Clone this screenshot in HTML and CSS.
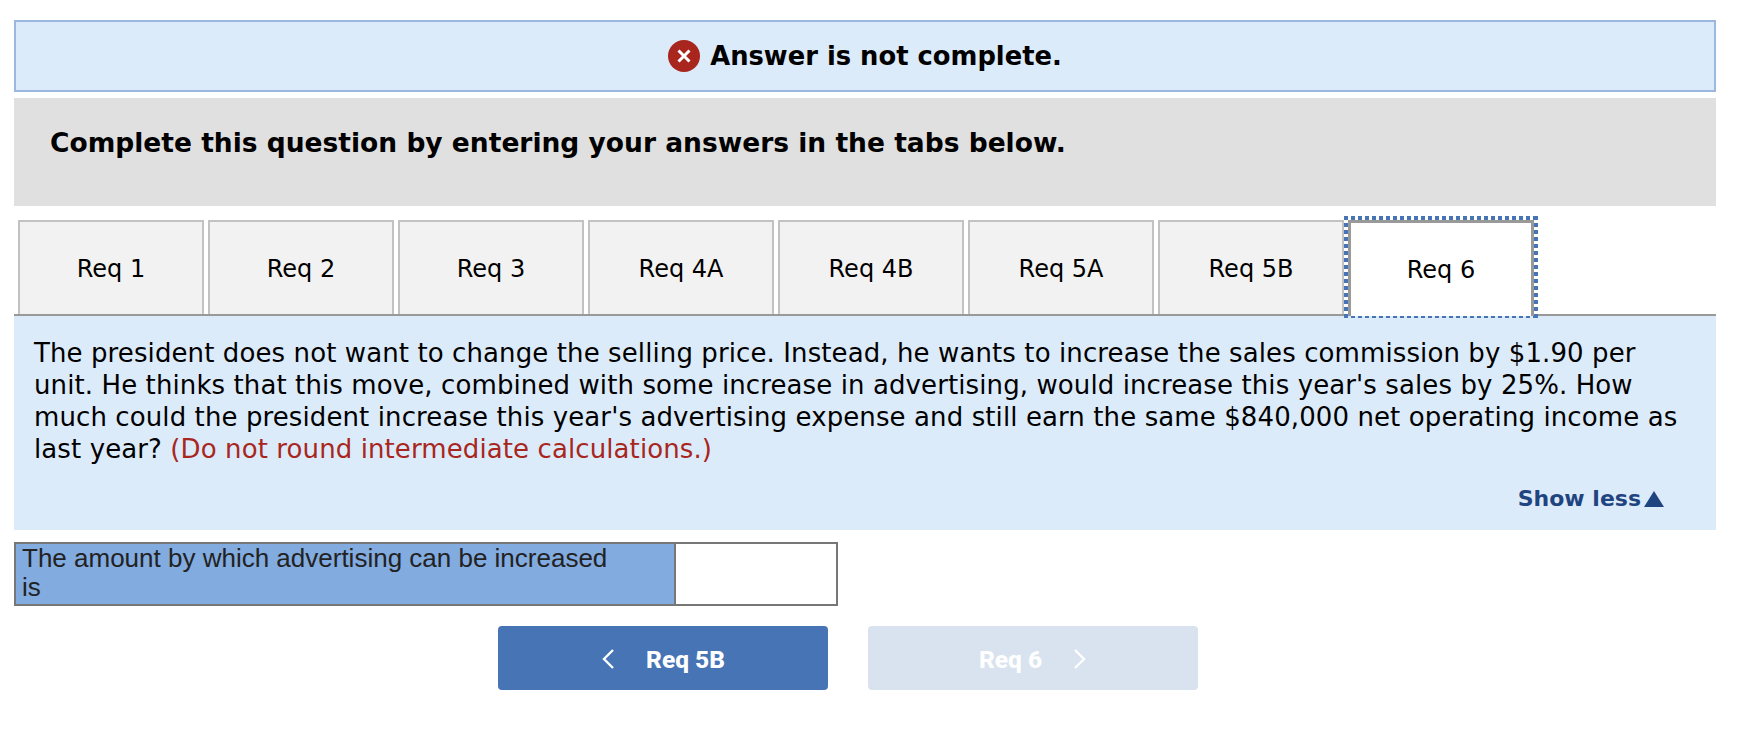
FILE: index.html
```html
<!DOCTYPE html>
<html lang="en">
<head>
  <meta charset="UTF-8">
  <title>Answer is not complete</title>
  <link rel="stylesheet" href="styles.css">
</head>
<body>

  <div class="container">
    <div class="banner">
      <svg class="banner-icon" width="32" height="32" viewBox="0 0 32 32">
        <circle cx="16" cy="16" r="16" fill="#a8261d"/>
        <path d="M10.5 10.5 L21.5 21.5 M21.5 10.5 L10.5 21.5" stroke="#fff" stroke-width="3"/>
      </svg>
      <span>Answer is not complete.</span>
    </div>

    <div class="instructions">Complete this question by entering your answers in the tabs below.</div>

    <div class="tabs">
      <div class="tab">Req 1</div>
      <div class="tab">Req 2</div>
      <div class="tab">Req 3</div>
      <div class="tab">Req 4A</div>
      <div class="tab">Req 4B</div>
      <div class="tab">Req 5A</div>
      <div class="tab">Req 5B</div>
      <div class="tab active">Req 6</div>
    </div>

    <!-- Question text -->
    <section class="question">
      <p>The president does not want to change the selling price. Instead, he wants to increase the sales commission by $1.90 per unit. He thinks that this move, combined with some increase in advertising, would increase this year's sales by 25%. How much could the president increase this year's advertising expense and still earn the same $840,000 net operating income as last year? <span class="note">(Do not round intermediate calculations.)</span></p>
      <div class="show-less">Show less<span class="arrow"></span></div>
    </section>

    <div class="answer-table">
      <div class="answer-label">The amount by which advertising can be increased is</div>
      <div class="answer-input"></div>
    </div>

    <div class="nav">
      <div class="nav-button">
        <svg width="14" height="22" viewBox="0 0 14 22"><path d="M12 2 L3 11 L12 20" fill="none" stroke="#fff" stroke-width="2.4"/></svg>
        <span>Req 5B</span>
      </div>
      <div class="nav-button disabled">
        <span>Req 6</span>
        <svg width="14" height="22" viewBox="0 0 14 22"><path d="M2 2 L11 11 L2 20" fill="none" stroke="#fff" stroke-width="2.4"/></svg>
      </div>
    </div>
  </div>

</body>
</html>
```

FILE: styles.css
```css
* {
  box-sizing: border-box;
}

body {
  font-family: "DejaVu Sans", sans-serif;
  background-color: #fff;
  color: #000;
  margin: 0;
  padding: 0;
  overflow: hidden;
}

.container {
  width: 1702px;
  margin: 20px 0 0 14px;
}

.banner {
  display: flex;
  align-items: center;
  justify-content: center;
  gap: 10px;
  height: 72px;
  background: #dcebf9;
  border: 2px solid #9bb9e0;
  font-size: 25.8px;
  font-weight: bold;
}

.instructions {
  height: 108px;
  margin-top: 6px;
  padding: 29px 36px;
  background: #e0e0e0;
  font-size: 26.5px;
  font-weight: bold;
}

.tabs {
  display: flex;
  gap: 4px;
  height: 94px;
  margin-top: 14px;
  padding-left: 4px;
}

.tab {
  display: flex;
  align-items: center;
  justify-content: center;
  width: 186px;
  padding-top: 2px;
  background: #f2f2f2;
  border: 2px solid #c2c2c2;
  border-bottom: none;
  font-size: 24px;
}

.tab.active {
  position: relative;
  height: 96px;
  padding-top: 0;
  background: #fff;
  border: 3px solid #999;
  border-bottom: none;
}

/* focus ring, square dots */
.tab.active::after {
  content: "";
  position: absolute;
  top: -7px;
  left: -7px;
  right: -7px;
  bottom: -2px;
  background:
    repeating-linear-gradient(90deg, #4674b4 0 4px, transparent 4px 7px) top / 100% 4px no-repeat,
    repeating-linear-gradient(90deg, #4674b4 0 4px, transparent 4px 7px) bottom / 100% 2px no-repeat,
    repeating-linear-gradient(0deg, #4674b4 0 4px, transparent 4px 7px) left / 4px 100% no-repeat,
    repeating-linear-gradient(0deg, #4674b4 0 4px, transparent 4px 7px) right / 4px 100% no-repeat;
}

.question {
  height: 216px;
  padding: 21px 20px 0;
  background: #dcebf9;
  border-top: 2px solid #999;
  font-size: 26px;
  line-height: 32px;
  letter-spacing: 0.1px;
}

.question p {
  max-width: 1645px;
  margin: 0;
}

.note {
  color: #a8261d;
}

.show-less {
  display: flex;
  align-items: center;
  justify-content: flex-end;
  gap: 3px;
  margin-top: 18px;
  padding-right: 32px;
  color: #1f4480;
  font-size: 22px;
  font-weight: bold;
  letter-spacing: 0;
}

.arrow {
  width: 0;
  height: 0;
  border-left: 10px solid transparent;
  border-right: 10px solid transparent;
  border-bottom: 16px solid #1f4480;
}

.answer-table {
  display: flex;
  width: 824px;
  height: 64px;
  margin-top: 12px;
  border: 2px solid #777;
  font-family: "Liberation Sans", Arial, sans-serif;
  font-size: 26px;
  line-height: 29px;
  color: #222;
}

.answer-label {
  width: 660px;
  padding: 0 60px 0 6px;
  background: #82abe0;
  border-right: 2px solid #777;
}

.answer-input {
  flex: 1;
  background: #fff;
}

.nav {
  display: flex;
  gap: 40px;
  margin: 20px 0 0 484px;
}

.nav-button {
  display: flex;
  align-items: center;
  justify-content: center;
  gap: 31px;
  width: 330px;
  height: 64px;
  padding-top: 2px;
  background: #4674b4;
  border-radius: 4px;
  color: #fff;
  font-family: Roboto, sans-serif;
  font-size: 24.5px;
  font-weight: 800;
}

.nav-button.disabled {
  background: #d9e3ef;
}
```
